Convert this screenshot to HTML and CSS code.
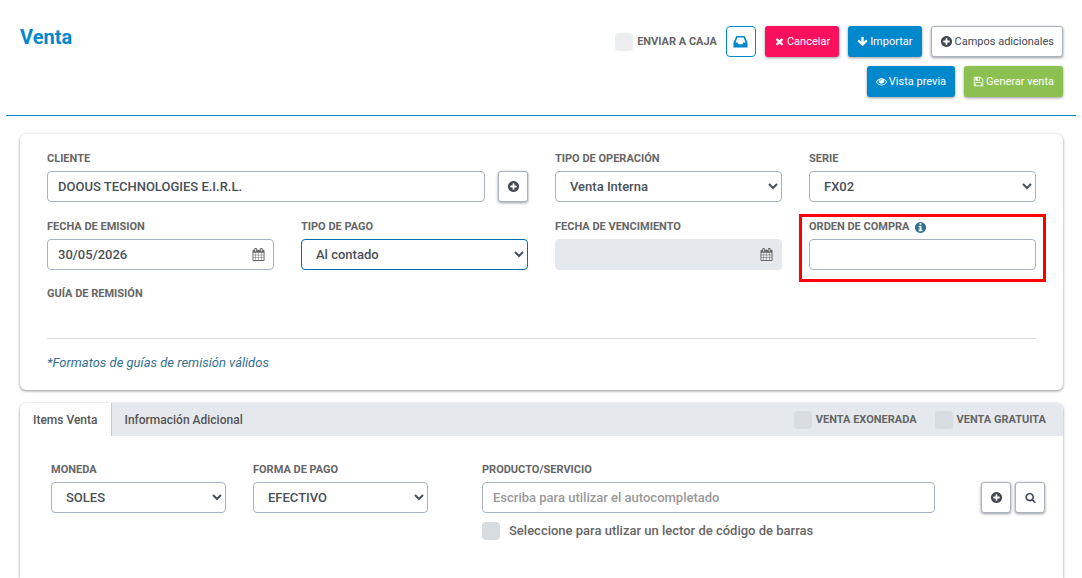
FILE: index.html
```html
<!DOCTYPE html>
<html lang="es">
<head>
  <meta charset="UTF-8" />
  <meta name="viewport" content="width=device-width, initial-scale=1" />
  <title>Venta</title>
  <link rel="stylesheet" href="styles.css">
</head>
<body>
  <!-- icons -->
  <svg class="icon-defs" aria-hidden="true">
    <symbol id="i-plus" viewBox="0 0 1792 1792"><path d="M1344 960v-128q0-26-19-45t-45-19h-256v-256q0-26-19-45t-45-19h-128q-26 0-45 19t-19 45v256h-256q-26 0-45 19t-19 45v128q0 26 19 45t45 19h256v256q0 26 19 45t45 19h128q26 0 45-19t19-45v-256h256q26 0 45-19t19-45zm320-64q0 209-103 385.5t-279.5 279.5-385.5 103-385.5-103-279.5-279.5-103-385.5 103-385.5 279.5-279.5 385.5-103 385.5 103 279.5 279.5 103 385.5z"/></symbol>
    <symbol id="i-times" viewBox="0 0 1792 1792"><path d="M1490 1322q0 40-28 68l-136 136q-28 28-68 28t-68-28l-294-294-294 294q-28 28-68 28t-68-28l-136-136q-28-28-28-68t28-68l294-294-294-294q-28-28-28-68t28-68l136-136q28-28 68-28t68 28l294 294 294-294q28-28 68-28t68 28l136 136q28 28 28 68t-28 68l-294 294 294 294q28 28 28 68z"/></symbol>
    <symbol id="i-down" viewBox="0 0 1792 1792"><path d="M1675 832q0 53-37 90l-651 652q-39 37-91 37-53 0-90-37l-651-652q-38-36-38-90 0-53 38-91l74-75q39-37 91-37 53 0 90 37l294 294v-704q0-52 38-90t90-38h128q52 0 90 38t38 90v704l294-294q37-37 90-37 52 0 91 37l75 75q37 39 37 91z"/></symbol>
    <symbol id="i-eye" viewBox="0 0 1792 1792"><path d="M1664 960q-152-236-381-353 61 104 61 225 0 185-131.5 316.5t-316.5 131.5-316.5-131.5-131.5-316.5q0-121 61-225-229 117-381 353 133 205 333.5 326.5t434.5 121.5 434.5-121.5 333.5-326.5zm-720-384q0-20-14-34t-34-14q-125 0-214.5 89.5t-89.5 214.5q0 20 14 34t34 14 34-14 14-34q0-86 61-147t147-61q20 0 34-14t14-34zm848 384q0 34-20 69-140 230-376.5 368.5t-499.5 138.5-499.5-139-376.5-368q-20-35-20-69t20-69q140-229 376.5-368t499.5-139 499.5 139 376.5 368q20 35 20 69z"/></symbol>
    <symbol id="i-save" viewBox="0 0 1792 1792"><path d="M512 1536h768v-384h-768v384zm896 0h128v-896q0-14-10-38.5t-20-34.5l-281-281q-10-10-34-20t-39-10v416q0 40-28 68t-68 28h-576q-40 0-68-28t-28-68v-416h-128v1280h128v-416q0-40 28-68t68-28h832q40 0 68 28t28 68v416zm-384-928v-320q0-13-9.5-22.5t-22.5-9.5h-192q-13 0-22.5 9.5t-9.5 22.5v320q0 13 9.5 22.5t22.5 9.5h192q13 0 22.5-9.5t9.5-22.5zm640 32v928q0 40-28 68t-68 28h-1344q-40 0-68-28t-28-68v-1344q0-40 28-68t68-28h928q40 0 88 20t76 48l280 280q28 28 48 76t20 88z"/></symbol>
    <symbol id="i-search" viewBox="0 0 1792 1792"><path d="M1216 832q0-185-131.5-316.5t-316.5-131.5-316.5 131.5-131.5 316.5 131.5 316.5 316.5 131.5 316.5-131.5 131.5-316.5zm512 832q0 52-38 90t-90 38q-54 0-90-38l-343-342q-179 124-399 124-143 0-273.5-55.5t-225-150-150-225-55.5-273.5 55.5-273.5 150-225 225-150 273.5-55.5 273.5 55.5 225 150 150 225 55.5 273.5q0 220-124 399l343 343q37 37 37 90z"/></symbol>
    <symbol id="i-info" viewBox="0 0 1792 1792"><path d="M1152 1376v-160q0-14-9-23t-23-9h-96v-512q0-14-9-23t-23-9h-320q-14 0-23 9t-9 23v160q0 14 9 23t23 9h96v320h-96q-14 0-23 9t-9 23v160q0 14 9 23t23 9h448q14 0 23-9t9-23zm-128-896v-160q0-14-9-23t-23-9h-192q-14 0-23 9t-9 23v160q0 14 9 23t23 9h192q14 0 23-9t9-23zm640 416q0 209-103 385.5t-279.5 279.5-385.5 103-385.5-103-279.5-279.5-103-385.5 103-385.5 279.5-279.5 385.5-103 385.5 103 279.5 279.5 103 385.5z"/></symbol>
    <symbol id="i-calendar" viewBox="0 0 1792 1792"><path d="M192 1664h288v-288h-288v288zm352 0h320v-288h-320v288zm-352-352h288v-320h-288v320zm352 0h320v-320h-320v320zm-352-384h288v-288h-288v288zm736 736h320v-288h-320v288zm-384-736h320v-288h-320v288zm768 736h288v-288h-288v288zm-384-352h320v-320h-320v320zm-352-864v-288q0-13-9.500-22.500t-22.500-9.500h-64q-13 0-22.500 9.500t-9.500 22.500v288q0 13 9.500 22.500t22.500 9.500h64q13 0 22.500-9.500t9.500-22.500zm736 864h288v-320h-288v320zm-384-384h320v-288h-320v288zm384 0h288v-288h-288v288zm32-480v-288q0-13-9.500-22.500t-22.500-9.500h-64q-13 0-22.500 9.500t-9.500 22.500v288q0 13 9.500 22.500t22.500 9.500h64q13 0 22.500-9.500t9.500-22.500zm384-64v1280q0 52-38 90t-90 38h-1408q-52 0-90-38t-38-90v-1280q0-52 38-90t90-38h128v-96q0-66 47-113t113-47h64q66 0 113 47t47 113v96h384v-96q0-66 47-113t113-47h64q66 0 113 47t47 113v96h128q52 0 90 38t38 90z"/></symbol>
    <symbol id="i-inbox" viewBox="0 0 16 16"><path fill-rule="evenodd" d="M3.500 2h9l3 7v5.500H.5V9zM4.700 3.800L2.600 9H5l1 2h4l1-2h2.400l-2.100-5.200z"/></symbol>
  </svg>

  <header class="page-header">
    <h1>Venta</h1>
    <div class="actions">
      <div class="check">
        <input type="checkbox" id="enviarCaja" class="check-light">
        <label for="enviarCaja">Enviar a caja</label>
      </div>
      <button type="button" class="btn btn-outline btn-square" aria-label="Caja"><svg class="icon icon-lg"><use href="#i-inbox"/></svg></button>
      <button type="button" class="btn btn-danger"><svg class="icon"><use href="#i-times"/></svg>Cancelar</button>
      <button type="button" class="btn btn-primary"><svg class="icon"><use href="#i-down"/></svg>Importar</button>
      <button type="button" class="btn btn-default"><svg class="icon icon-md"><use href="#i-plus"/></svg>Campos adicionales</button>
      <button type="button" class="btn btn-primary"><svg class="icon"><use href="#i-eye"/></svg>Vista previa</button>
      <button type="button" class="btn btn-success"><svg class="icon"><use href="#i-save"/></svg>Generar venta</button>
    </div>
  </header>

  <main>
    <section class="card datos">
      <div class="form-grid">
        <div class="field field-wide">
          <label for="cliente">Cliente</label>
          <div class="input-row">
            <input type="text" id="cliente" class="control" value="DOOUS TECHNOLOGIES E.I.R.L.">
            <button type="button" class="btn btn-default btn-square" aria-label="Agregar cliente"><svg class="icon icon-md"><use href="#i-plus"/></svg></button>
          </div>
        </div>
        <div class="field">
          <label for="tipoOperacion">Tipo de operación</label>
          <select id="tipoOperacion" class="control"><option>Venta Interna</option></select>
        </div>
        <div class="field">
          <label for="serie">Serie</label>
          <select id="serie" class="control"><option>FX02</option></select>
        </div>
        <div class="field">
          <label for="emision">Fecha de emision</label>
          <div class="date-box">
            <input type="text" id="emision" class="control" value="30/05/2026">
            <svg class="icon icon-md"><use href="#i-calendar"/></svg>
          </div>
        </div>
        <div class="field">
          <label for="tipoPago">Tipo de pago</label>
          <select id="tipoPago" class="control active"><option>Al contado</option></select>
        </div>
        <div class="field">
          <label for="vencimiento">Fecha de vencimiento</label>
          <div class="date-box">
            <input type="text" id="vencimiento" class="control" disabled>
            <svg class="icon icon-md"><use href="#i-calendar"/></svg>
          </div>
        </div>
        <div class="field marked">
          <label for="ordenCompra">Orden de compra <svg class="icon icon-md icon-info"><use href="#i-info"/></svg></label>
          <input type="text" id="ordenCompra" class="control">
        </div>
      </div>
      <div class="guia">
        <h2>Guía de remisión</h2>
      </div>
      <a href="#" class="formatos">*Formatos de guías de remisión válidos</a>
    </section>

    <section class="card items">
      <div class="tabs">
        <button type="button" class="tab tab-active">Items Venta</button>
        <button type="button" class="tab">Información Adicional</button>
        <div class="tab-checks">
          <div class="check">
            <input type="checkbox" id="exonerada">
            <label for="exonerada">Venta exonerada</label>
          </div>
          <div class="check">
            <input type="checkbox" id="gratuita">
            <label for="gratuita">Venta gratuita</label>
          </div>
        </div>
      </div>
      <div class="items-grid">
        <div class="field">
          <label for="moneda">Moneda</label>
          <select id="moneda" class="control"><option>SOLES</option></select>
        </div>
        <div class="field">
          <label for="formaPago">Forma de pago</label>
          <select id="formaPago" class="control"><option>EFECTIVO</option></select>
        </div>
        <div class="field producto">
          <label for="producto">Producto/Servicio</label>
          <input type="text" id="producto" class="control" placeholder="Escriba para utilizar el autocompletado">
          <div class="check check-text">
            <input type="checkbox" id="lector">
            <label for="lector">Seleccione para utlizar un lector de código de barras</label>
          </div>
        </div>
        <div class="item-buttons">
          <button type="button" class="btn btn-default btn-square" aria-label="Agregar producto"><svg class="icon icon-md"><use href="#i-plus"/></svg></button>
          <button type="button" class="btn btn-default btn-square" aria-label="Buscar"><svg class="icon"><use href="#i-search"/></svg></button>
        </div>
      </div>
    </section>
  </main>
</body>
</html>
```
FILE: styles.css
```css
* { box-sizing: border-box; }
body {
  margin: 0;
  min-height: 100vh;
  display: flex;
  flex-direction: column;
  font-family: Roboto, "Liberation Sans", sans-serif;
  font-size: 13px;
  color: #666;
  background: #fff;
}
button, input, select {
  font-family: inherit;
}
.icon-defs {
  position: absolute;
  width: 0;
  height: 0;
}
.icon {
  width: 11px;
  height: 11px;
  fill: currentColor;
  flex: none;
}
.icon-md {
  width: 13px;
  height: 13px;
}
.icon-lg {
  width: 15px;
  height: 15px;
}

/* header */
.page-header {
  display: flex;
  justify-content: space-between;
  align-items: flex-start;
  margin: 0 6px;
  padding: 26px 13px 18px 14px;
  border-bottom: 1px solid #0088cc;
}
.page-header h1 {
  margin: 0;
  font-size: 20px;
  line-height: 22px;
  font-weight: 700;
  color: #0088cc;
}
.actions {
  width: 50%;
  display: flex;
  flex-wrap: wrap;
  justify-content: flex-end;
  gap: 9px;
}

.btn {
  height: 31px;
  padding: 0 8px;
  display: inline-flex;
  align-items: center;
  justify-content: center;
  gap: 2px;
  border: 1px solid transparent;
  border-radius: 3px;
  font-size: 11px;
  color: #fff;
  white-space: nowrap;
  cursor: pointer;
  box-shadow: 0 1px 3px rgba(0, 0, 0, 0.4);
}
.btn-square {
  width: 30px;
  padding: 0;
  flex: none;
}
.btn-primary { background: #0088cc; }
.btn-danger { background: #fa105c; }
.btn-success { background: #8cc152; }
.btn-default {
  background: #fff;
  border-color: #a9b2bd;
  color: #414853;
}
.btn-outline {
  background: #fff;
  border-color: #0088cc;
  border-radius: 4px;
  color: #0088cc;
  box-shadow: none;
}

/* checkboxes */
.check {
  display: flex;
  align-items: center;
  gap: 4px;
}
.check input {
  appearance: none;
  width: 18px;
  height: 18px;
  margin: 0;
  border-radius: 4px;
  background: #d6dcdf;
}
.check .check-light {
  background: #ebedef;
}
.check label, .field > label, .guia h2 {
  font-size: 11px;
  line-height: 16px;
  font-weight: 700;
  text-transform: uppercase;
}
.check-text {
  gap: 9px;
  padding-top: 9px;
}
.check-text label {
  font-size: 13px;
  font-weight: 500;
  text-transform: none;
}

main {
  flex: 1;
  display: flex;
  flex-direction: column;
  gap: 13px;
  padding: 18px 19px 0 20px;
}
.card {
  background: #fff;
  border-radius: 6px;
  box-shadow: 0 1px 3px rgba(0, 0, 0, 0.45);
}
.datos {
  padding: 17px 27px 18px;
}
.form-grid {
  display: grid;
  grid-template-columns: repeat(4, 1fr);
  gap: 17px 27px;
}
.field {
  display: flex;
  flex-direction: column;
  min-width: 0;
}
.field > label {
  display: flex;
  align-items: center;
  gap: 5px;
  margin-bottom: 4px;
}
.field-wide {
  grid-column: span 2;
}
.input-row {
  display: flex;
  gap: 13px;
}
.control {
  width: 100%;
  height: 31px;
  padding: 0 10px;
  border: 1px solid #a9b2c0;
  border-radius: 4px;
  background: #fff;
  font-size: 13px;
  font-weight: 500;
  color: #495057;
}
.control.active {
  border-color: #0070b0;
}
.control:disabled {
  background: #e5e9ee;
  border-color: #e5e9ee;
}
.control::placeholder {
  color: #999;
}
.date-box {
  position: relative;
}
.date-box .icon {
  position: absolute;
  top: 9px;
  right: 9px;
  color: #666;
}
.icon-info {
  color: #31708f;
}

/* red frame round the field */
.marked {
  position: relative;
}
.marked::after {
  content: "";
  position: absolute;
  inset: -5px -10px -12px;
  border: 3px solid #f00;
  pointer-events: none;
}

.guia {
  height: 53px;
  margin: 16px 0 15px;
  border-bottom: 1px solid #ddd;
}
.guia h2 {
  margin: 0;
}
.formatos {
  display: block;
  font-size: 13px;
  line-height: 18px;
  font-style: italic;
  color: #31708f;
  text-decoration: none;
}

/* items */
.items {
  flex: 1;
  border-radius: 6px 6px 0 0;
}
.tabs {
  display: flex;
  background: #e5e9ee;
  border-radius: 6px 6px 0 0;
}
.tab {
  height: 33px;
  padding: 0 13px;
  border: 0;
  background: none;
  font-size: 12px;
  font-weight: 500;
  color: #555;
  cursor: pointer;
}
.tab-active {
  background: #fff;
  border-right: 1px solid #c5cad2;
  border-radius: 6px 0 0 0;
}
.tab-checks {
  display: flex;
  gap: 18px;
  margin-left: auto;
  padding-right: 17px;
}
.items-grid {
  display: grid;
  grid-template-columns: 175fr 175fr 499fr auto;
  gap: 27px;
  padding: 26px 18px 26px 31px;
}
.producto {
  padding: 0 19px 0 27px;
}
.item-buttons {
  display: flex;
  gap: 4px;
  padding-top: 20px;
}
```
